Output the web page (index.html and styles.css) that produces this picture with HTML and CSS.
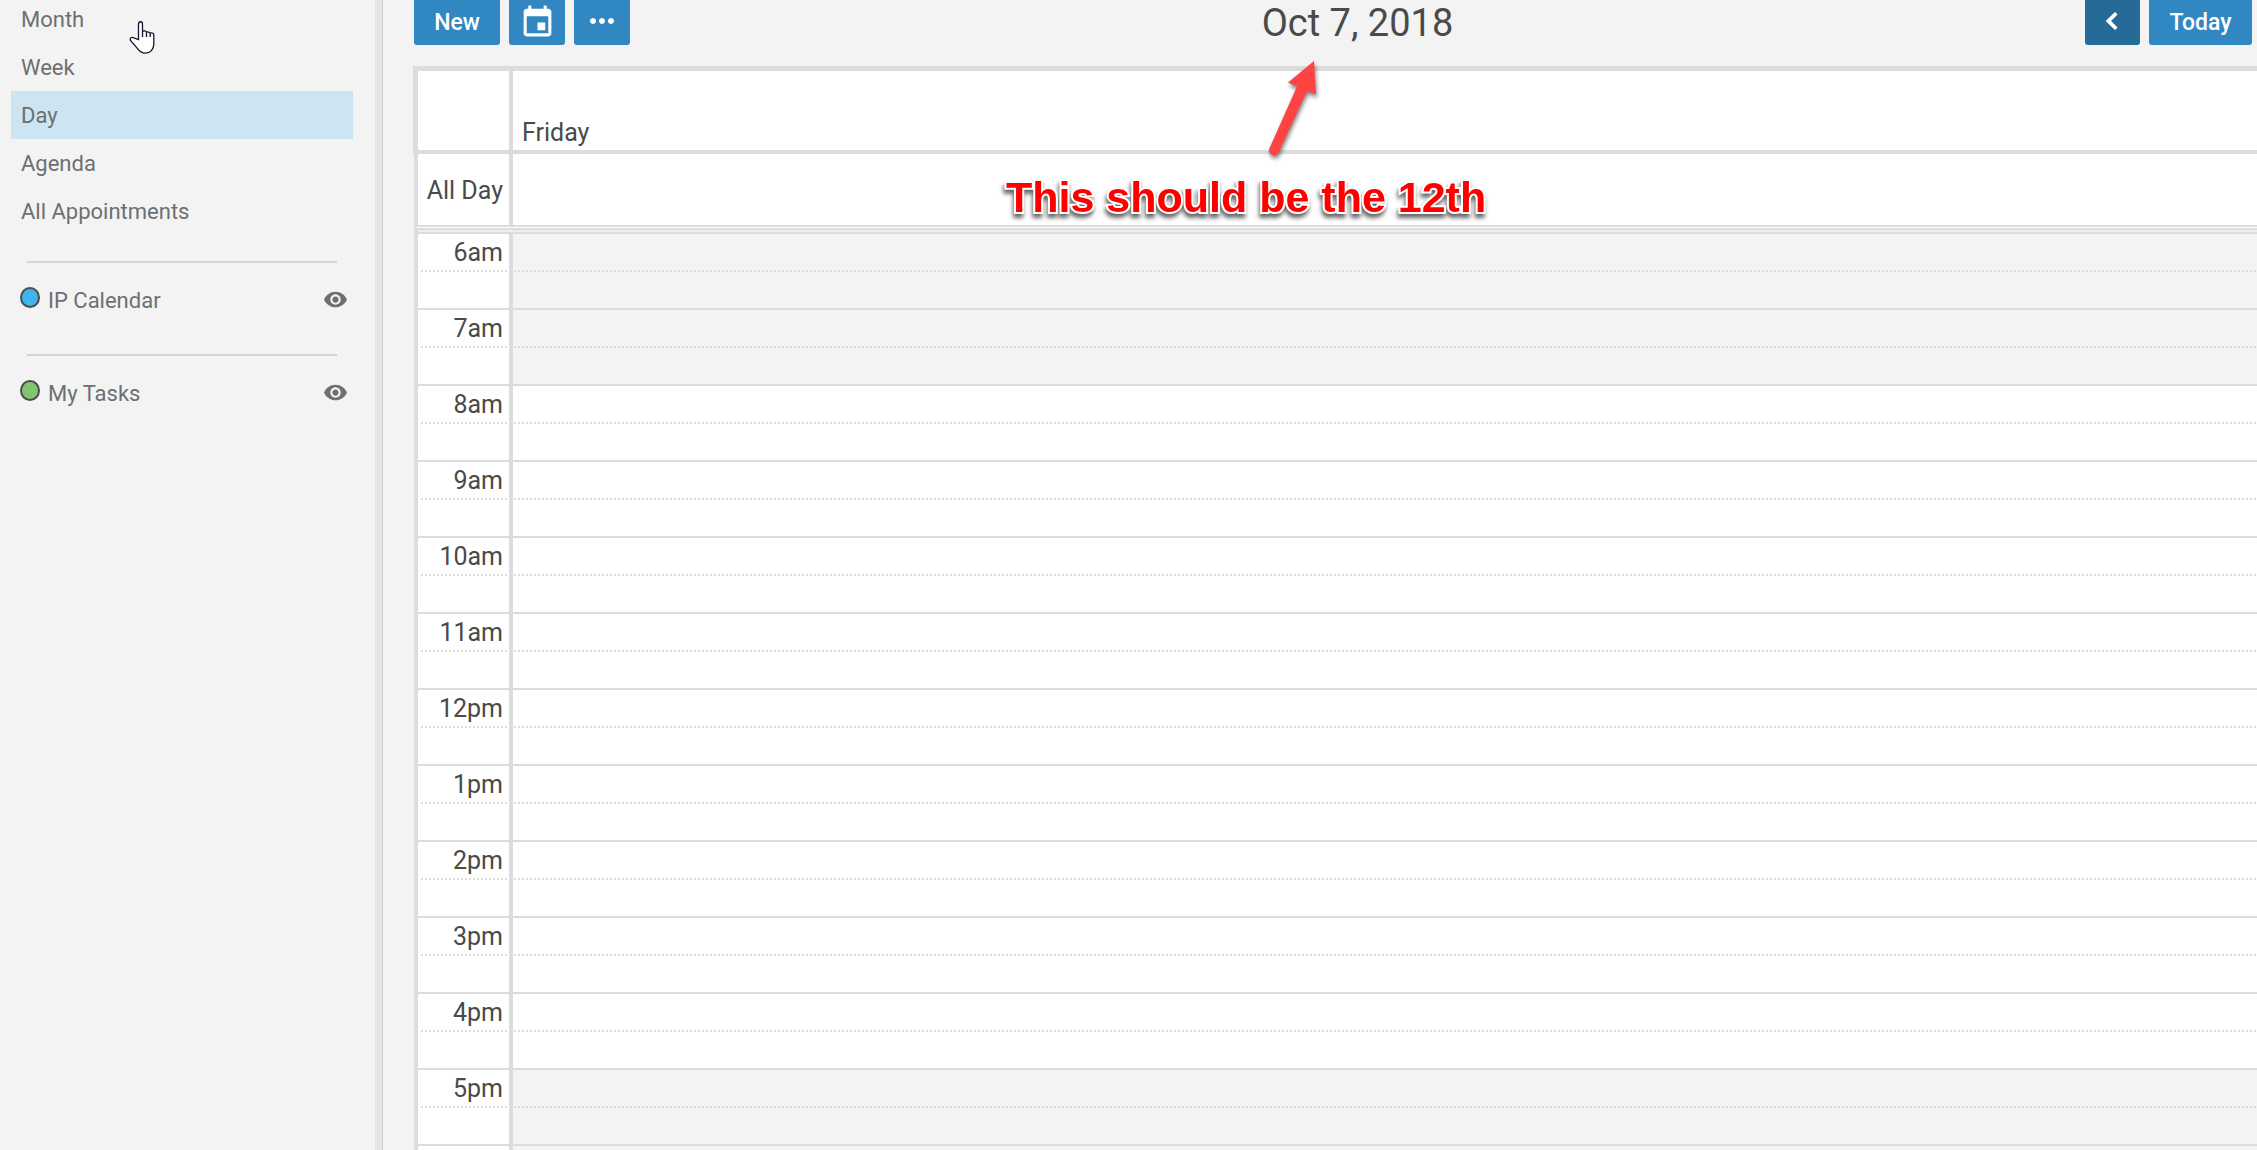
FILE: index.html
```html
<!DOCTYPE html>
<html lang="en">
<head>
<meta charset="utf-8">
<title>Calendar</title>
<link rel="stylesheet" href="styles.css">
</head>
<body>
<div class="app">
  <aside class="sidebar">
    <nav class="views" aria-label="Calendar views">
      <a class="view" href="#month">Month</a>
      <a class="view" href="#week">Week</a>
      <a class="view view-active" href="#day" aria-current="page">Day</a>
      <a class="view" href="#agenda">Agenda</a>
      <a class="view" href="#all">All Appointments</a>
    </nav>
    <section class="source">
      <span class="dot dot-blue"></span>
      <span class="source-name">IP Calendar</span>
      <button class="eye" type="button" aria-label="Toggle IP Calendar">
        <svg width="25" height="25" viewBox="0 0 24 24"><path d="M12 4.500C7 4.500 2.730 7.610 1 12c1.730 4.390 6 7.500 11 7.500s9.270-3.110 11-7.500c-1.730-4.390-6-7.500-11-7.500zM12 17c-2.760 0-5-2.240-5-5s2.240-5 5-5 5 2.240 5 5-2.240 5-5 5zm0-8c-1.660 0-3 1.340-3 3s1.340 3 3 3 3-1.340 3-3-1.340-3-3-3z"/></svg>
      </button>
    </section>
    <section class="source">
      <span class="dot dot-green"></span>
      <span class="source-name">My Tasks</span>
      <button class="eye" type="button" aria-label="Toggle My Tasks">
        <svg width="25" height="25" viewBox="0 0 24 24"><path d="M12 4.500C7 4.500 2.730 7.610 1 12c1.730 4.390 6 7.500 11 7.500s9.270-3.110 11-7.500c-1.730-4.390-6-7.500-11-7.500zM12 17c-2.760 0-5-2.240-5-5s2.240-5 5-5 5 2.240 5 5-2.240 5-5 5zm0-8c-1.660 0-3 1.340-3 3s1.340 3 3 3 3-1.340 3-3-1.340-3-3-3z"/></svg>
      </button>
    </section>
  </aside>
  <div class="splitter"></div>
  <main class="main">
    <header class="toolbar">
      <div class="group">
        <button class="btn btn-new" type="button">New</button>
        <button class="btn btn-icon" type="button" aria-label="Go to date">
          <svg width="37" height="37" viewBox="0 0 24 24"><path d="M17 12h-5v5h5v-5zM16 1v2H8V1H6v2H5c-1.110 0-1.990.9-1.990 2L3 19c0 1.100.89 2 2 2h14c1.100 0 2-.9 2-2V5c0-1.100-.9-2-2-2h-1V1h-2zm3 18H5V8h14v11z"/></svg>
        </button>
        <button class="btn btn-icon btn-raised" type="button" aria-label="More">
          <svg width="36" height="36" viewBox="0 0 24 24"><path d="M6 10c-1.100 0-2 .9-2 2s.9 2 2 2 2-.9 2-2-.9-2-2-2zm12 0c-1.100 0-2 .9-2 2s.9 2 2 2 2-.9 2-2-.9-2-2-2zm-6 0c-1.100 0-2 .9-2 2s.9 2 2 2 2-.9 2-2-.9-2-2-2z"/></svg>
        </button>
      </div>
      <h1 class="title">Oct 7, 2018</h1>
      <div class="group">
        <button class="btn btn-prev btn-raised" type="button" aria-label="Previous day">
          <svg width="36" height="36" viewBox="0 0 24 24"><path d="M15.700 7.700 14 6l-6.200 6 6.200 6 1.700-1.700L11.400 12z"/></svg>
        </button>
        <button class="btn btn-today" type="button">Today</button>
      </div>
    </header>
    <div class="calendar">
      <table class="grid grid-head">
        <tr><td class="corner"></td><th class="day" scope="col">Friday</th></tr>
      </table>
      <table class="grid grid-allday">
        <tr><th class="label" scope="row">All Day</th><td></td></tr>
      </table>
      <div class="divider"></div>
      <table class="grid grid-hours">
        <tr class="off"><th class="label" scope="row">6am</th><td></td></tr>
        <tr class="off"><th class="label" scope="row">7am</th><td></td></tr>
        <tr><th class="label" scope="row">8am</th><td></td></tr>
        <tr><th class="label" scope="row">9am</th><td></td></tr>
        <tr><th class="label" scope="row">10am</th><td></td></tr>
        <tr><th class="label" scope="row">11am</th><td></td></tr>
        <tr><th class="label" scope="row">12pm</th><td></td></tr>
        <tr><th class="label" scope="row">1pm</th><td></td></tr>
        <tr><th class="label" scope="row">2pm</th><td></td></tr>
        <tr><th class="label" scope="row">3pm</th><td></td></tr>
        <tr><th class="label" scope="row">4pm</th><td></td></tr>
        <tr class="off"><th class="label" scope="row">5pm</th><td></td></tr>
        <tr class="off"><td class="label"></td><td></td></tr>
      </table>
    </div>
  </main>
</div>
<svg class="arrow" width="60" height="120" viewBox="0 0 60 120"><path d="M54 4 56 37.500 47 34 18.600 95.500A5 5 0 0 1 9.400 91.500L37 29.500 28 25.500z"/></svg>
<p class="note">This should be the 12th</p>
<svg class="pointer" width="28" height="34" viewBox="0 0 28 34"><path d="M9.500 18.500V3c0-3 4-3 4 0v7.500c1-1 3.400-.7 4 .8 1-.6 3-.4 3.600.8 1.200-.5 3.700-.2 3.700 2V23c0 5.500-3.500 9.200-8.500 9.200-4 0-6-2-8.200-5L1.500 19.500c-1-2.500 1-3.800 3.300-2.700zM13.500 10.500V16M17.500 11.300V16M21.200 12.300V16"/></svg>
</body>
</html>
```

FILE: styles.css
```css
* { box-sizing: border-box; }

body {
  margin: 0;
  height: 100vh;
  overflow: hidden;
  background: #f3f3f3;
  color: #4a4a4a;
  font-family: Roboto, "Liberation Sans", sans-serif;
  font-size: 25px;
}

button { font: inherit; border: 0; padding: 0; cursor: pointer; }

.app { display: flex; height: 100vh; overflow: hidden; }

/* Sidebar */
.sidebar {
  flex: 0 0 375px;
  color: #6c7072;
  font-size: 22px;
}

.views { margin: -5px 22px 26px 11px; }

.view {
  display: block;
  padding: 2px 0 0 10px;
  line-height: 46px;
  color: inherit;
  text-decoration: none;
}

.view-active { background: #cde5f3; }

.source {
  display: flex;
  align-items: center;
  height: 62px;
  margin: 0 38px 31px 27px;
  padding-top: 12px;
  border-top: 2px solid #d4d4d4;
}

.dot {
  width: 20px;
  height: 21px;
  margin: 0 8px 4px -7px;
  border: 2px solid #4c4c4c;
  border-radius: 50%;
}

.dot-blue { background: #3fb4ee; }
.dot-green { background: #80c670; }

.source-name { flex: 1; padding-top: 2px; }

.eye {
  display: flex;
  margin-right: -11px;
  background: none;
}

.eye svg { fill: #6c7072; }

.splitter {
  flex: 0 0 8px;
  background: #e5e5e5;
  border-right: 1px solid #cecece;
}

/* Toolbar */
.main { flex: 1; min-width: 0; padding-left: 30px; }

.toolbar {
  display: flex;
  justify-content: space-between;
  align-items: center;
  height: 45px;
  margin: 0 5px 21px 1px;
}

.group { display: flex; gap: 9px; }

.btn {
  display: flex;
  align-items: center;
  justify-content: center;
  height: 45px;
  border-radius: 0 0 3px 3px;
  background: #3187c2;
  color: #fff;
  font-size: 23px;
  font-weight: 500;
}

.btn svg { fill: #fff; }
.btn-new { width: 86px; }
.btn-icon { width: 56px; }
.btn-today { width: 103px; }
.btn-raised { padding-bottom: 4px; }
.btn-prev { width: 55px; background: #266a98; }

.title { margin: 0; font-size: 38px; font-weight: 400; line-height: 44px; }

/* Day grid */
.grid {
  width: 100%;
  table-layout: fixed;
  border-collapse: separate;
  border-spacing: 0;
}

.grid th, .grid td { padding: 0; background-color: #fff; font-weight: 400; }

.grid-head { border: solid #dcdcdc; border-width: 5px 0 4px 5px; }
.grid-allday, .grid-hours, .divider { border-left: 4px solid #dcdcdc; }
.grid-allday, .grid-hours, .divider { width: calc(100% - 1px); margin-left: 1px; }

.corner, .label { width: 95px; border-right: 4px solid #dcdcdc; }

.grid-head .day {
  height: 79px;
  padding: 0 0 3px 9px;
  text-align: left;
  vertical-align: bottom;
  line-height: 28px;
}

.grid .label { padding-top: 2px; padding-right: 6px; text-align: right; line-height: 28px; }

.grid-allday th, .grid-allday td { height: 73px; border-bottom: 2px solid #dcdcdc; }

.divider {
  height: 7px;
  border-top: 1px solid #fff;
  border-bottom: 2px solid #dcdcdc;
  background: linear-gradient(#dcdcdc 2px, #eeeeee 2px);
}

.grid-hours th, .grid-hours td {
  height: 76px;
  border-bottom: 2px solid #dcdcdc;
  background-image: repeating-linear-gradient(90deg, #dcdcdc 0 2px, transparent 2px 4px);
  background-repeat: no-repeat;
  background-size: 100% 2px;
  background-position: 1px 36px;
}

.grid-hours .label {
  padding-top: 5px;
  vertical-align: top;
  background-size: 86px 2px;
  background-position: 3px 36px;
}

.grid-hours .off td { background-color: #f3f3f3; }
.grid-hours .off td.label { background-color: #fff; }

/* Annotations laid over the page */
.arrow {
  position: absolute;
  left: 1260px;
  top: 57px;
  fill: #ff4343;
  filter: drop-shadow(1px 3px 2px rgba(0, 0, 0, 0.5));
}

.note {
  position: absolute;
  left: 1006px;
  top: 172px;
  margin: 0;
  color: #f00;
  font: bold 43px/50px "Liberation Sans", Arial, sans-serif;
  white-space: nowrap;
  -webkit-text-stroke: 4px #fff;
  paint-order: stroke fill;
  filter: drop-shadow(-1px 4px 2px rgba(0, 0, 0, 0.6));
}

.pointer {
  position: absolute;
  left: 129px;
  top: 21px;
  fill: #fff;
  stroke: #14142b;
  stroke-width: 1.3;
  pointer-events: none;
}
```
